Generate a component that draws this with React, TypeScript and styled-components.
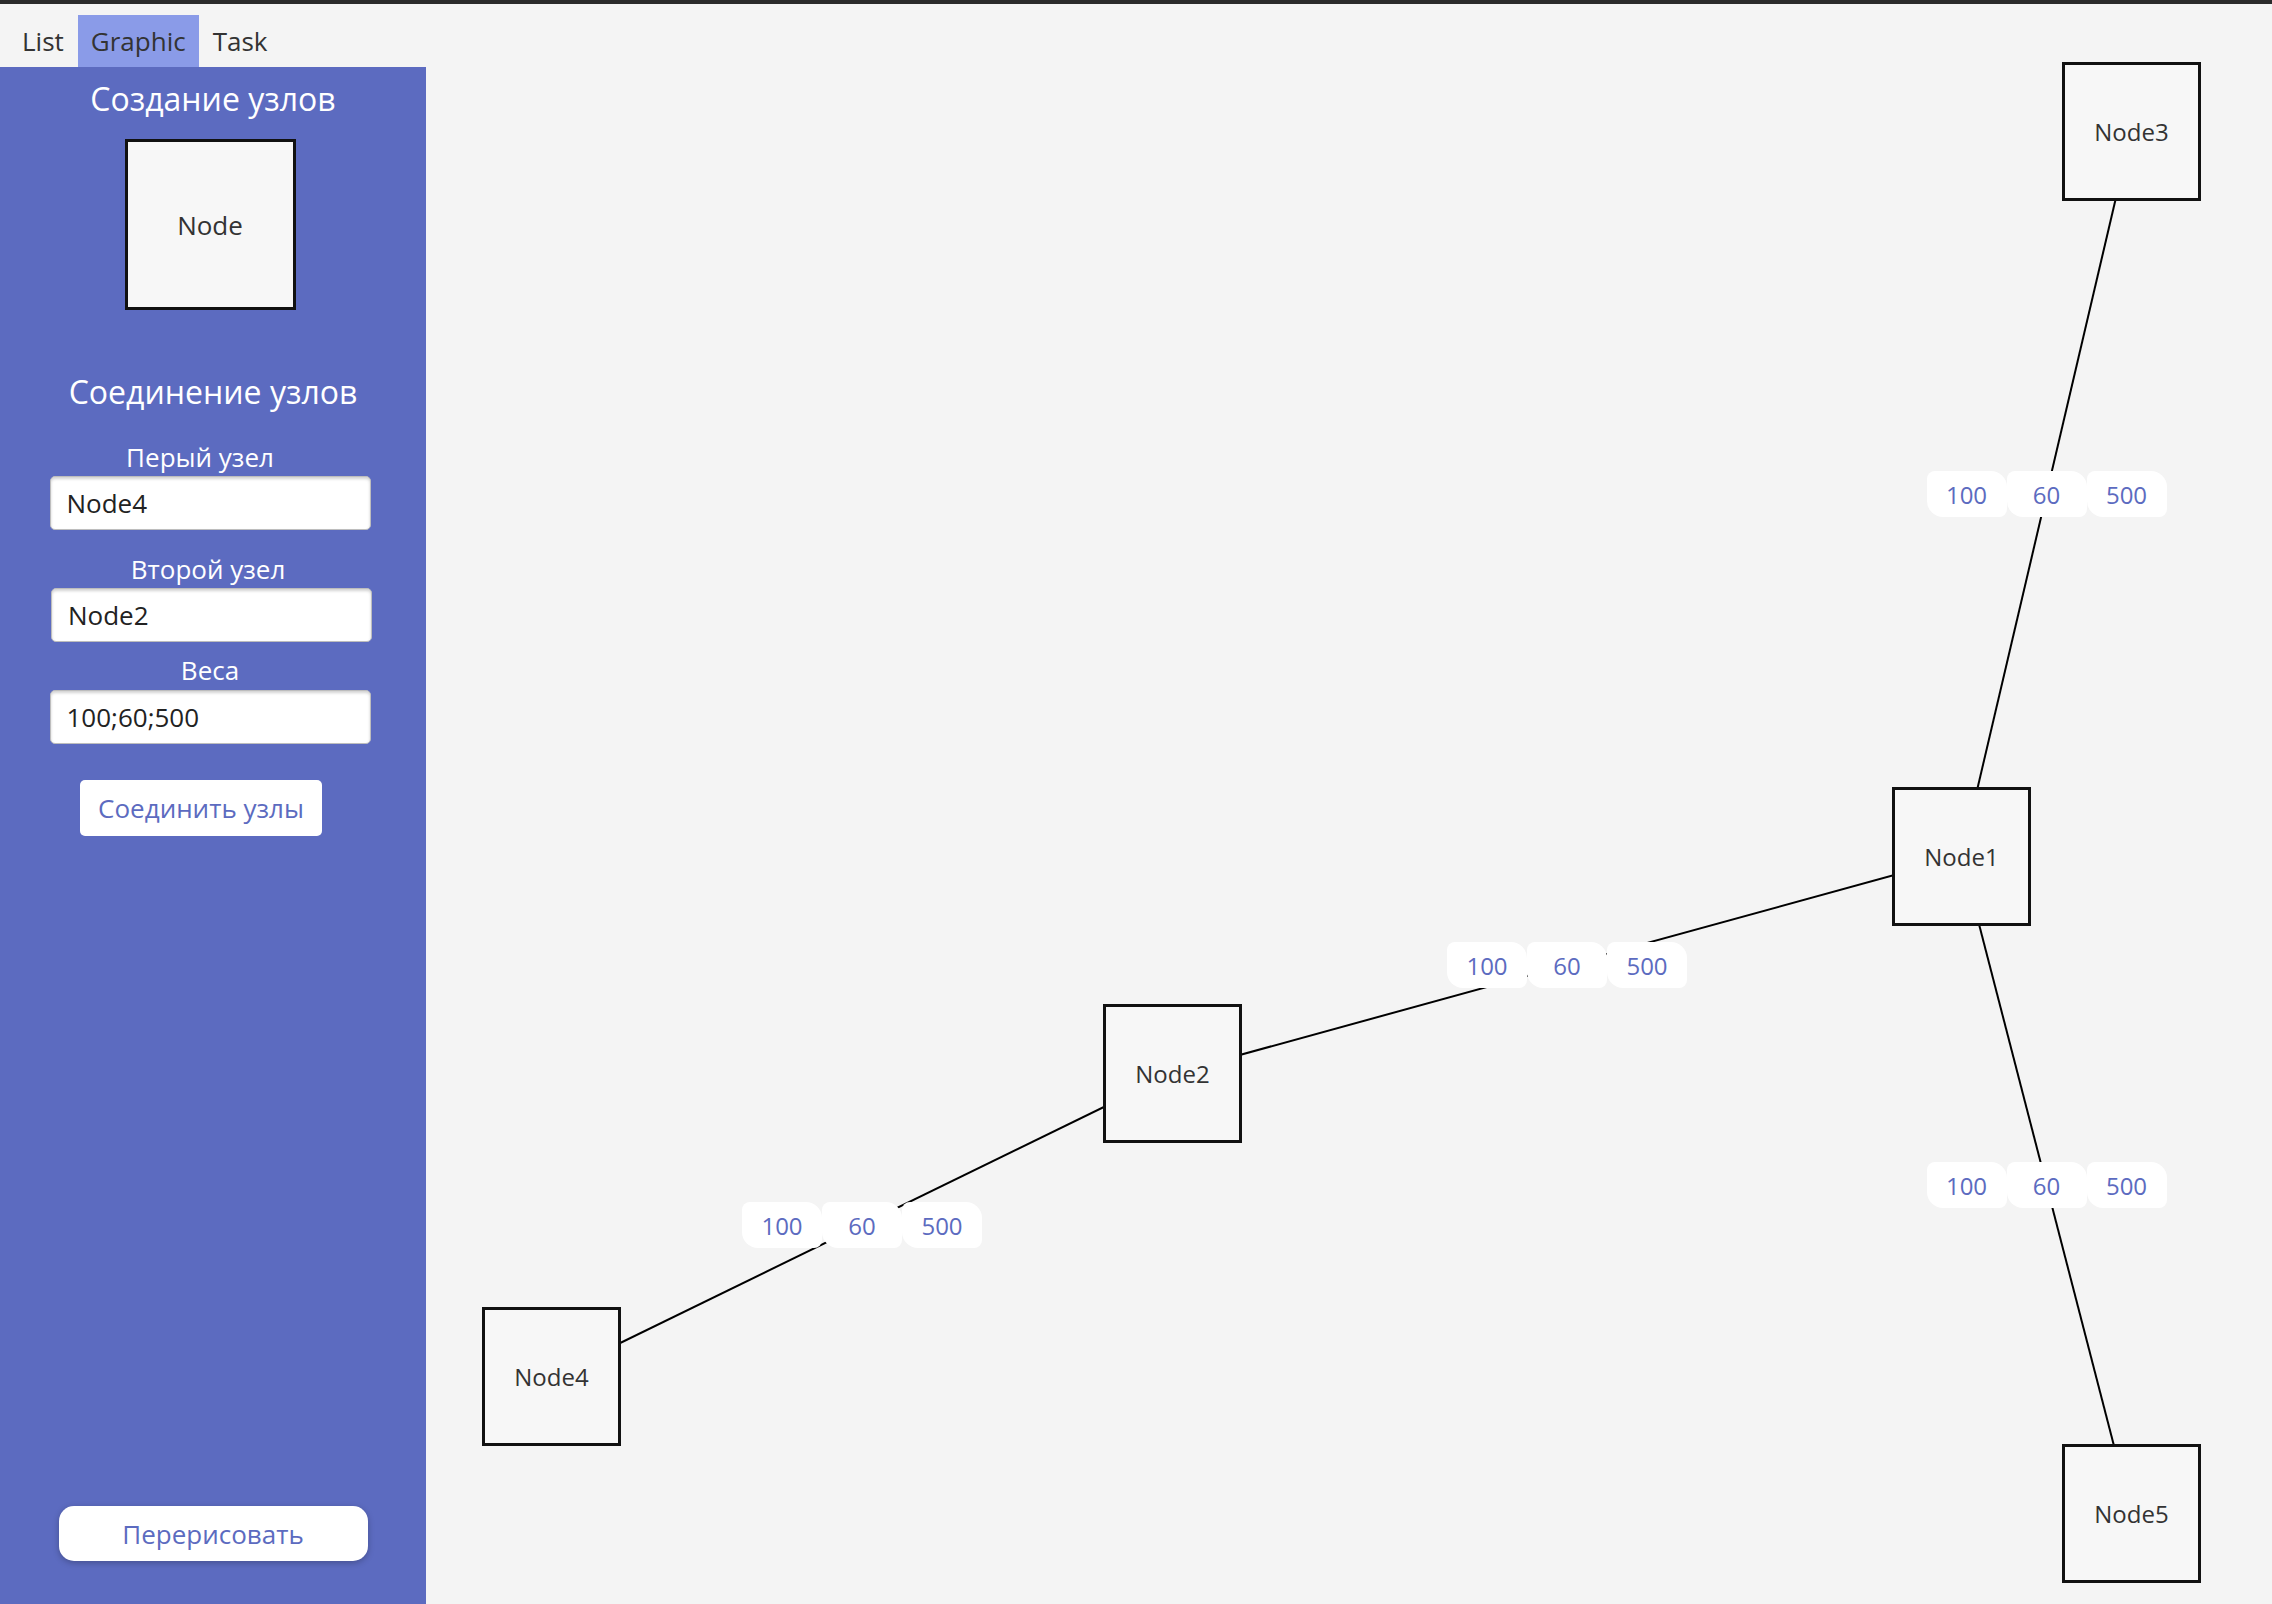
import React from "react";
import styled, { createGlobalStyle } from "styled-components";

const GlobalStyle = createGlobalStyle`
  html, body {
    margin: 0;
    padding: 0;
    background: #f4f4f4;
    font-family: "Open Sans", "Noto Sans", "DejaVu Sans", sans-serif;
  }
  * {
    box-sizing: border-box;
  }
`;

const ACCENT = "#5c6bc0";
const NODE_SIZE = 139;

interface GraphNode {
  id: string;
  x: number;
  y: number;
}

const nodes: GraphNode[] = [
  { id: "Node3", x: 1636, y: 58 },
  { id: "Node1", x: 1466, y: 783 },
  { id: "Node2", x: 677, y: 1000 },
  { id: "Node4", x: 56, y: 1303 },
  { id: "Node5", x: 1636, y: 1440 },
];

const edges: Array<{ from: string; to: string; weights: number[] }> = [
  { from: "Node3", to: "Node1", weights: [100, 60, 500] },
  { from: "Node1", to: "Node2", weights: [100, 60, 500] },
  { from: "Node2", to: "Node4", weights: [100, 60, 500] },
  { from: "Node1", to: "Node5", weights: [100, 60, 500] },
];

const center = (id: string) => {
  const n = nodes.find((item) => item.id === id)!;
  return { cx: n.x + NODE_SIZE / 2, cy: n.y + NODE_SIZE / 2 };
};

const Page = styled.div`
  display: flex;
  flex-direction: column;
  height: 100vh;
  overflow: hidden;
`;

const TopStrip = styled.div`
  height: 4px;
  flex-shrink: 0;
  background: #2b2b2b;
`;

const Body = styled.div`
  display: flex;
  flex: 1;
  min-height: 0;
`;

const LeftColumn = styled.div`
  width: 426px;
  display: flex;
  flex-direction: column;
  flex-shrink: 0;
`;

const Tabs = styled.div`
  height: 63px;
  display: flex;
  align-items: flex-end;
  gap: 1px;
  padding-left: 9px;
`;

const Tab = styled.div<{ $active?: boolean }>`
  height: 52px;
  line-height: 52px;
  padding: 0 13px;
  font-size: 26px;
  color: #333;
  background: ${(p) => (p.$active ? "#8a9be8" : "transparent")};
  cursor: pointer;
`;

const Sidebar = styled.div`
  flex: 1;
  background: ${ACCENT};
  display: flex;
  flex-direction: column;
  align-items: center;
`;

const SectionTitle = styled.div<{ $top: number }>`
  margin-top: ${(p) => p.$top}px;
  font-size: 32px;
  line-height: 42px;
  color: #fff;
`;

const Form = styled.div`
  display: flex;
  flex-direction: column;
  align-items: center;
  padding-right: 6px;
`;

const PaletteNode = styled.div`
  margin-top: 19px;
  margin-right: 6px;
  width: 171px;
  height: 171px;
  border: 3px solid #111;
  background: #f7f7f7;
  display: flex;
  align-items: center;
  justify-content: center;
  font-size: 26px;
  color: #333;
`;

const FieldLabel = styled.div<{ $top: number; $shift?: number }>`
  margin-top: ${(p) => p.$top}px;
  margin-right: ${(p) => p.$shift ?? 0}px;
  font-size: 26px;
  line-height: 35px;
  color: #fff;
`;

const TextInput = styled.input<{ $top: number; $shift?: number }>`
  margin-top: ${(p) => p.$top}px;
  margin-left: ${(p) => p.$shift ?? 0}px;
  width: 321px;
  height: 54px;
  padding: 0 16px;
  border: 1px solid #bdbdbd;
  border-radius: 5px;
  background: #fff;
  box-shadow: inset 0 2px 3px rgba(0, 0, 0, 0.18);
  font-family: inherit;
  font-size: 26px;
  color: #222;
  outline: none;
`;

const ConnectButton = styled.button`
  margin-top: 36px;
  margin-right: 18px;
  height: 56px;
  padding: 0 18px;
  border: none;
  border-radius: 5px;
  background: #fff;
  font-family: inherit;
  font-size: 26px;
  color: ${ACCENT};
  cursor: pointer;
`;

const Spacer = styled.div`
  flex: 1;
`;

const RedrawButton = styled.button`
  margin-bottom: 43px;
  width: 309px;
  height: 55px;
  border: none;
  border-radius: 15px;
  background: #fff;
  box-shadow: 0 2px 6px rgba(0, 0, 0, 0.25);
  font-family: inherit;
  font-size: 26px;
  color: ${ACCENT};
  cursor: pointer;
`;

const Canvas = styled.div`
  position: relative;
  flex: 1;
`;

const Edges = styled.svg`
  position: absolute;
  inset: 0;
  width: 100%;
  height: 100%;
`;

const NodeBox = styled.div`
  position: absolute;
  width: ${NODE_SIZE}px;
  height: ${NODE_SIZE}px;
  border: 3px solid #111;
  background: #f7f7f7;
  display: flex;
  align-items: center;
  justify-content: center;
  font-size: 24px;
  color: #333;
`;

const WeightGroup = styled.div`
  position: absolute;
  display: flex;
  transform: translate(-50%, -50%);
`;

const WeightChip = styled.div`
  width: 80px;
  height: 46px;
  display: flex;
  align-items: center;
  justify-content: center;
  background: #fff;
  border-radius: 8px 16px 8px 16px;
  font-size: 24px;
  color: ${ACCENT};
`;

export default function App() {
  return (
    <Page>
      <GlobalStyle />
      <TopStrip />
      <Body>
        <LeftColumn>
          <Tabs>
            <Tab>List</Tab>
            <Tab $active>Graphic</Tab>
            <Tab>Task</Tab>
          </Tabs>
          <Sidebar>
            <SectionTitle $top={11}>Создание узлов</SectionTitle>
            <PaletteNode>Node</PaletteNode>
            <SectionTitle $top={61}>Соединение узлов</SectionTitle>
            <Form>
              <FieldLabel $top={27} $shift={20}>
                Перый узел
              </FieldLabel>
              <TextInput $top={1} defaultValue="Node4" />
              <FieldLabel $top={22} $shift={4}>
                Второй узел
              </FieldLabel>
              <TextInput $top={1} $shift={3} defaultValue="Node2" />
              <FieldLabel $top={11}>Веса</FieldLabel>
              <TextInput $top={2} defaultValue="100;60;500" />
              <ConnectButton>Соединить узлы</ConnectButton>
            </Form>
            <Spacer />
            <RedrawButton>Перерисовать</RedrawButton>
          </Sidebar>
        </LeftColumn>
        <Canvas>
          <Edges>
            {edges.map((e) => {
              const a = center(e.from);
              const b = center(e.to);
              return (
                <line
                  key={`${e.from}-${e.to}`}
                  x1={a.cx}
                  y1={a.cy}
                  x2={b.cx}
                  y2={b.cy}
                  stroke="#000"
                  strokeWidth={2}
                />
              );
            })}
          </Edges>
          {nodes.map((n) => (
            <NodeBox key={n.id} style={{ left: n.x, top: n.y }}>
              {n.id}
            </NodeBox>
          ))}
          {edges.map((e) => {
            const a = center(e.from);
            const b = center(e.to);
            return (
              <WeightGroup
                key={`w-${e.from}-${e.to}`}
                style={{ left: (a.cx + b.cx) / 2, top: (a.cy + b.cy) / 2 }}
              >
                {e.weights.map((w, i) => (
                  <WeightChip key={i}>{w}</WeightChip>
                ))}
              </WeightGroup>
            );
          })}
        </Canvas>
      </Body>
    </Page>
  );
}
